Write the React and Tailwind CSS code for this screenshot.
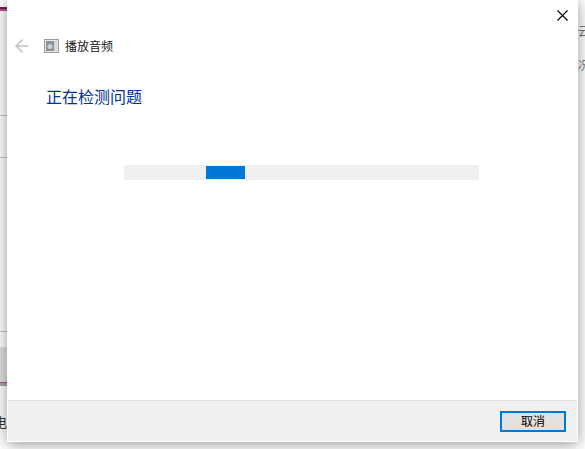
import React from 'react';
import { ArrowLeft, X } from 'lucide-react';

const cjk = { fontFamily: '"Noto Sans CJK SC", "Liberation Sans", sans-serif' };

// what is left visible of the window behind the dialog
const LeftStrip = () => (
    <div className="w-[7px] shrink-0 h-full overflow-hidden flex flex-col">
        <div className="h-[7px]"></div>
        <div className="h-[2px] bg-[#5c2a48]"></div>
        <div className="h-[2px] bg-[#d0409a]"></div>
        <div className="mt-[104px] h-px bg-[#c4c4c4]"></div>
        <div className="mt-[41px] h-px bg-[#c4c4c4]"></div>
        <div className="mt-[173px] h-px bg-[#c4c4c4]"></div>
        <div className="mt-[15px] h-[35px] bg-[#e0e0e0]"></div>
        <div className="h-px bg-[#c8409a]"></div>
        <div className="h-[3px] bg-[#a8a8a8]"></div>
        <div className="mt-[26px] -ml-[6px] text-[13px] leading-[20px] text-[#333]">电</div>
    </div>
);

const RightStrip = () => (
    <div className="flex-1 h-full overflow-hidden flex flex-col gap-[16px] pt-[22px] text-[12px] leading-[18px] text-[#777]">
        <div>云</div>
        <div>况</div>
    </div>
);

const AudioIcon = () => (
    <svg width="15" height="14" viewBox="0 0 15 14" className="shrink-0">
        <rect x="0.5" y="0.5" width="14" height="13" fill="#e8e8e8" stroke="#9a9a9a" />
        <rect x="2" y="2" width="8" height="10" fill="#8a9298" />
        <rect x="10" y="2" width="3" height="10" fill="#d6d6d6" />
        <circle cx="6" cy="7.5" r="2.5" fill="#c9cfd4" />
    </svg>
);

export default function App() {
    return (
        <div className="w-[585px] h-[449px] overflow-hidden bg-white flex" style={cjk}>
            <LeftStrip />

            <div className="relative z-10 w-[571px] h-[442px] shrink-0 bg-white flex flex-col shadow-[0_2px_14px_rgba(0,0,0,0.42)]">
                <div className="flex justify-end h-[30px]">
                    <button className="w-[32px] h-[30px] flex items-center justify-center text-black">
                        <X size={19} strokeWidth={1.4} />
                    </button>
                </div>

                <div className="flex items-center h-[16px] mt-[8px] pl-[5px]">
                    <ArrowLeft size={20} strokeWidth={2} className="text-[#c4c4c4]" />
                    <div className="ml-[12px]">
                        <AudioIcon />
                    </div>
                    <span className="ml-[6px] text-[12px] leading-[16px] text-[#1a1a1a]">播放音频</span>
                </div>

                <h1 className="mt-[31px] ml-[39px] text-[16px] leading-[22px] font-normal text-[#003399]">正在检测问题</h1>

                <div className="mt-[58px] ml-[117px] w-[355px] h-[15px] bg-[#efefef] pl-[82px] py-px">
                    <div className="w-[39px] h-[13px] bg-[#0078d7]"></div>
                </div>

                <div className="mt-auto mx-px mb-px h-[41px] bg-[#f0f0f0] border-t border-[#dfdfdf] flex items-center justify-end pr-[11px]">
                    <button className="w-[66px] h-[21px] bg-[#e1e1e1] border-2 border-[#0078d7] text-[12px] leading-[16px] text-black">取消</button>
                </div>
            </div>

            <RightStrip />
        </div>
    );
}
